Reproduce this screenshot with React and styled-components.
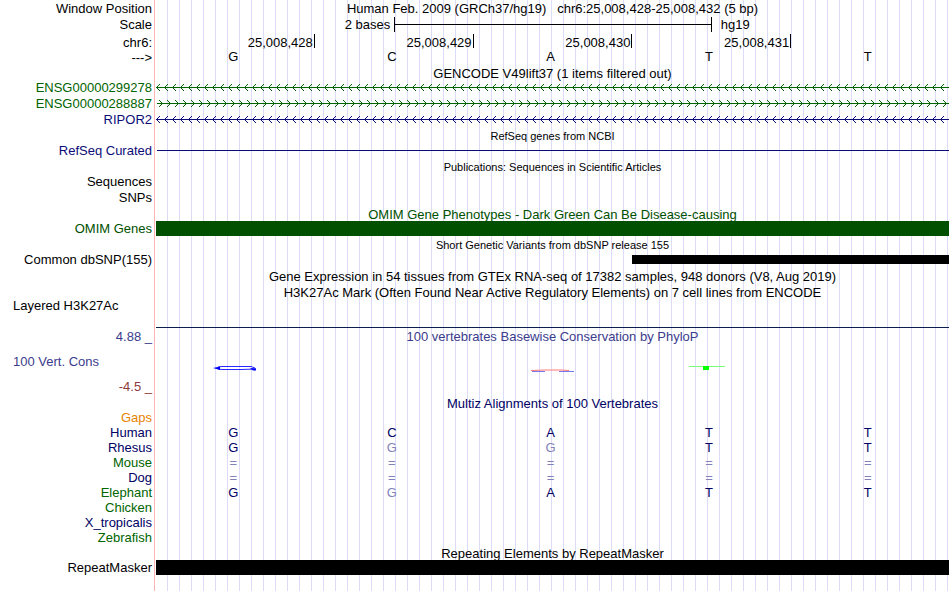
import styled, { createGlobalStyle } from "styled-components";

const GlobalStyle = createGlobalStyle`
  * {
    box-sizing: border-box;
  }
  body {
    margin: 0;
    background-color: white;
    color: black;
    font-family: "Liberation Sans", Arial, sans-serif;
    font-size: 13px;
  }
`;

const Browser = styled.main`
  min-height: 100vh;
  padding: 0 1px 16px 0;
  overflow-x: hidden;
  background: linear-gradient(#ffb4b4, #ffb4b4) 154px 0 / 1px 100% no-repeat,
    repeating-linear-gradient(
        to right,
        transparent 0,
        transparent 11px,
        #dcdcf8 11px,
        #dcdcf8 12px
      )
      156px 0 no-repeat;
`;
const Row = styled.div`
  display: grid;
  grid-template-columns: 156px 1fr;
  height: ${(props) => props.$height || 16}px;
  line-height: ${(props) => props.$line || props.$height || 16}px;
  white-space: nowrap;
`;
const Label = styled.div`
  padding: 0 4px 0 13px;
  text-align: ${(props) => props.$align || "right"};
  color: ${(props) => props.$color || "black"};
`;
const Title = styled.div`
  text-align: center;
  font-size: ${(props) => (props.$small ? 11 : 13)}px;
  color: ${(props) => props.$color || "black"};
`;
const Scale = styled.div`
  display: grid;
  grid-template-columns: 30% 40% 30%;
  margin-right: -1px;
`;
const ScaleText = styled.span`
  padding: 0 4px 0 ${(props) => (props.$end ? 9 : 0)}px;
  text-align: ${(props) => (props.$end ? "left" : "right")};
`;
const ScaleBar = styled.div`
  display: flex;
  align-items: center;
  height: 15px;
  border: solid black;
  border-width: 0 1px;

  &::before {
    content: "";
    flex: 1;
    height: 1px;
    background-color: black;
  }
`;
const Cells = styled.div`
  display: grid;
  grid-template-columns: repeat(5, 1fr);
`;
const Ruler = styled(Cells)`
  margin-right: -1px;
`;
const Position = styled.span`
  height: 14px;
  line-height: 17px;
  padding-right: 1px;
  text-align: right;
  border-right: ${(props) => (props.$tick ? "1px solid black" : "none")};
`;
const Base = styled.span`
  padding-right: 4px;
  line-height: 14px;
  text-align: center;
`;
const Track = styled.div`
  display: flex;
  align-items: center;
`;
const Block = styled.div`
  width: ${(props) => props.$width || "100%"};
  height: ${(props) => props.$height}px;
  margin-left: auto;
  background-color: ${(props) => props.$color};
`;
const Intron = styled.svg`
  display: block;
  width: 100%;
  height: 15px;
  shape-rendering: crispEdges;
`;
const Baseline = styled.div`
  border-bottom: 1px solid #0a1e50;
`;
const ConsLabel = styled(Label)`
  display: flex;
  flex-direction: column;
  gap: 7px;
`;
const ConsValue = styled.span`
  color: ${(props) => props.$color};
  text-align: ${(props) => props.$align || "right"};
`;
const Logos = styled(Cells)`
  padding-top: 16px;
  justify-items: center;
`;
const Logo = styled.svg`
  width: 44px;
  height: 10px;
`;
const Alignment = styled.table`
  width: 100%;
  table-layout: fixed;
  border-collapse: collapse;
  line-height: 15px;
`;
const Species = styled.th`
  width: 156px;
  height: 15px;
  padding: 0 4px 0 0;
  font-weight: normal;
  text-align: right;
  color: ${(props) => props.$color};
`;
const AlignedBase = styled.td`
  padding: 0 4px 0 0;
  text-align: center;
  color: ${(props) => (props.$faint ? "#8282b9" : "#000064")};
`;

const navy = "#000064";
const green = "#006400";
const refseq = "#0c0c78";

const positions = ["25,008,428", "25,008,429", "25,008,430", "25,008,431", ""];
const bases = ["G", "C", "A", "T", "T"];

const genes = [
  { name: "ENSG00000299278", color: green, strand: "-" },
  { name: "ENSG00000288887", color: green, strand: "+" },
  { name: "RIPOR2", color: refseq, strand: "-" },
];

const species = [
  { name: "Gaps", color: "#e68200", seq: "     " },
  { name: "Human", color: navy, seq: "GCATT" },
  { name: "Rhesus", color: navy, seq: "GGGTT" },
  { name: "Mouse", color: green, seq: "=====" },
  { name: "Dog", color: navy, seq: "=====" },
  { name: "Elephant", color: green, seq: "GGATT" },
  { name: "Chicken", color: green, seq: "     " },
  { name: "X_tropicalis", color: navy, seq: "     " },
  { name: "Zebrafish", color: green, seq: "     " },
];

const TitleRow = ({ height, small, color, children }) => (
  <Row $height={height} $line={height + 2}>
    <Label />
    <Title $small={small} $color={color}>
      {children}
    </Title>
  </Row>
);

const Gene = ({ name, color, strand }) => {
  const id = `arrows-${name}`;
  const forward = strand === "+";
  return (
    <Row>
      <Label $color={color}>{name}</Label>
      <Intron aria-hidden="true">
        <defs>
          <pattern id={id} width="8" height="15" patternUnits="userSpaceOnUse">
            {/* one pixel per step so the arrow heads stay sharp */}
            <path
              fill={color}
              d={
                forward
                  ? "M6 7h1v1h-1zM5 6h1v1h-1zM5 8h1v1h-1zM4 5h1v1h-1zM4 9h1v1h-1zM3 4h1v1h-1zM3 10h1v1h-1z"
                  : "M0 7h1v1h-1zM1 6h1v1h-1zM1 8h1v1h-1zM2 5h1v1h-1zM2 9h1v1h-1zM3 4h1v1h-1zM3 10h1v1h-1z"
              }
            />
          </pattern>
        </defs>
        <rect x="1" y="7" width="100%" height="1" fill={color} />
        <rect width="100%" height="15" fill={`url(#${id})`} />
      </Intron>
    </Row>
  );
};

const App = () => {
  return (
    <>
      <GlobalStyle />
      <Browser>
        <Row $height={17}>
          <Label>Window Position</Label>
          <Title>
            Human Feb. 2009 (GRCh37/hg19) &nbsp; chr6:25,008,428-25,008,432 (5
            bp)
          </Title>
        </Row>
        <Row $height={17} $line={16}>
          <Label>Scale</Label>
          <Scale>
            <ScaleText>2 bases</ScaleText>
            <ScaleBar />
            <ScaleText $end>hg19</ScaleText>
          </Scale>
        </Row>
        <Row $line={18}>
          <Label>chr6:</Label>
          <Ruler>
            {positions.map((position, i) => (
              <Position key={i} $tick={position !== ""}>
                {position}
              </Position>
            ))}
          </Ruler>
        </Row>
        <Row>
          <Label>---&gt;</Label>
          <Cells>
            {bases.map((base, i) => (
              <Base key={i}>{base}</Base>
            ))}
          </Cells>
        </Row>

        <TitleRow height={14}>GENCODE V49lift37 (1 items filtered out)</TitleRow>
        {genes.map((gene) => (
          <Gene key={gene.name} {...gene} />
        ))}

        <TitleRow height={15} small>
          RefSeq genes from NCBI
        </TitleRow>
        <Row>
          <Label $color={refseq}>RefSeq Curated</Label>
          <Intron aria-hidden="true">
            <rect x="1" y="7" width="100%" height="1" fill={refseq} />
          </Intron>
        </Row>

        <TitleRow height={15} small>
          Publications: Sequences in Scientific Articles
        </TitleRow>
        <Row>
          <Label>Sequences</Label>
        </Row>
        <Row>
          <Label>SNPs</Label>
        </Row>

        <TitleRow height={15} color="#005000">
          OMIM Gene Phenotypes - Dark Green Can Be Disease-causing
        </TitleRow>
        <Row $height={15}>
          <Label $color="#005000">OMIM Genes</Label>
          <Track>
            <Block $height={15} $color="#005000" />
          </Track>
        </Row>

        <TitleRow height={16} small>
          Short Genetic Variants from dbSNP release 155
        </TitleRow>
        <Row $height={15}>
          <Label>Common dbSNP(155)</Label>
          <Track>
            <Block $height={9} $width="40%" $color="black" />
          </Track>
        </Row>

        <TitleRow height={17}>
          Gene Expression in 54 tissues from GTEx RNA-seq of 17382 samples, 948
          donors (V8, Aug 2019)
        </TitleRow>
        <TitleRow height={15}>
          H3K27Ac Mark (Often Found Near Active Regulatory Elements) on 7 cell
          lines from ENCODE
        </TitleRow>
        <Row $height={29} $line={14}>
          <Label $align="left">Layered H3K27Ac</Label>
          <Baseline />
        </Row>

        <Row $height={68} $line={18}>
          <ConsLabel>
            <ConsValue $color="#3c3c8c">4.88 _</ConsValue>
            <ConsValue $color="#3c3c8c" $align="left">
              100 Vert. Cons
            </ConsValue>
            <ConsValue $color="#8c3c3c">-4.5 _</ConsValue>
          </ConsLabel>
          <div>
            <Title $color="#3c3c8c">
              100 vertebrates Basewise Conservation by PhyloP
            </Title>
            <Logos>
              <Logo viewBox="0 0 44 10" aria-hidden="true">
                <path
                  d="M5 5L9 4.5H38L42 6M5 7L9 7.5H28L43 7"
                  fill="none"
                  stroke="#2828ff"
                />
                <path d="M0 6L7 4.5V8zM37 6L43 6.5V8.5H40z" fill="#0000ff" />
              </Logo>
              <span />
              <Logo viewBox="-1 0 44 10" aria-hidden="true">
                <path d="M0 8.5L14 8H30L38 8.5" fill="none" stroke="#ff7878" />
                <path d="M1 9.5H14M28 9.5H43" stroke="#7878f0" />
              </Logo>
              <Logo viewBox="1 0 44 10" aria-hidden="true">
                <path d="M1 4.5H37" stroke="#78ff78" />
                <path d="M15 4h6v4h-6z" fill="#00ff00" />
              </Logo>
            </Logos>
          </div>
        </Row>

        <TitleRow height={14} color={navy}>
          Multiz Alignments of 100 Vertebrates
        </TitleRow>
        <Alignment>
          <tbody>
            {species.map(({ name, color, seq }) => (
              <tr key={name}>
                <Species scope="row" $color={color}>
                  {name}
                </Species>
                {seq.split("").map((base, i) => (
                  <AlignedBase key={i} $faint={base !== bases[i]}>
                    {base}
                  </AlignedBase>
                ))}
              </tr>
            ))}
          </tbody>
        </Alignment>

        <TitleRow height={15}>Repeating Elements by RepeatMasker</TitleRow>
        <Row $height={15}>
          <Label>RepeatMasker</Label>
          <Track>
            <Block $height={15} $color="black" />
          </Track>
        </Row>
      </Browser>
    </>
  );
};

export default App;
